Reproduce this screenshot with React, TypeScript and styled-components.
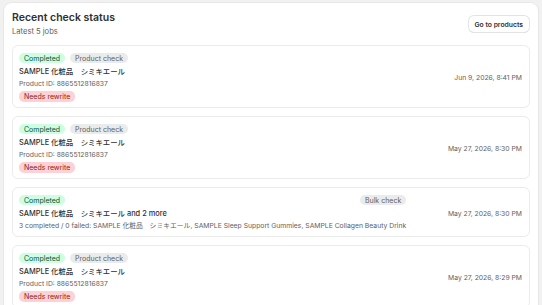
import React from 'react';
import styled, { createGlobalStyle } from 'styled-components';

type Tone = 'success' | 'neutral' | 'critical';

interface Job {
    kind: string;
    title: string;
    detail: string;
    needsRewrite: boolean;
    date: string;
}

const GlobalStyle = createGlobalStyle`
  html, body {
    margin: 0;
    padding: 0;
    background-color: #f1f1f1;
    font-family: Inter, "Noto Sans CJK JP", sans-serif;
    color: #303030;
    -webkit-font-smoothing: antialiased;
  }
`;

const Page = styled.div`
  padding: 3px 4px 0 4px;
`;

const Card = styled.div`
  background-color: #ffffff;
  border-radius: 8px;
  padding: 8px;
  box-shadow: 0 0 0 1px rgba(0, 0, 0, 0.04), 0 1px 0 rgba(0, 0, 0, 0.06);
`;

const Header = styled.div`
  display: flex;
  justify-content: space-between;
  align-items: flex-start;
`;

const HeaderText = styled.div`
  display: flex;
  flex-direction: column;
  gap: 3px;
`;

const Title = styled.h2`
  margin: 0;
  font-size: 10.5px;
  line-height: 13px;
  font-weight: 600;
  color: #303030;
`;

const Subtitle = styled.span`
  font-size: 7.6px;
  line-height: 10px;
  color: #616161;
`;

const Button = styled.button`
  margin-top: 5px;
  margin-right: 1px;
  height: 16px;
  padding: 0 6px;
  border: none;
  border-radius: 5px;
  background-color: #ffffff;
  box-shadow: 0 0 0 1px #e3e3e3, 0 1px 0 #d4d4d4;
  font-family: inherit;
  font-size: 6.8px;
  font-weight: 600;
  color: #303030;
`;

const List = styled.div`
  display: flex;
  flex-direction: column;
  gap: 8px;
  margin-top: 8px;
`;

const JobCard = styled.div`
  display: flex;
  justify-content: space-between;
  align-items: center;
  border: 1px solid #ebebeb;
  border-radius: 6px;
  padding: 7px 7px 5px 6px;
`;

const JobInfo = styled.div`
  display: flex;
  flex-direction: column;
  gap: 2px;
`;

const BadgeRow = styled.div`
  display: flex;
  justify-content: space-between;
  gap: 5px;
`;

const toneColors: Record<Tone, { bg: string; fg: string }> = {
    success: { bg: '#cdfee1', fg: '#0c5132' },
    neutral: { bg: '#ebebeb', fg: '#616161' },
    critical: { bg: '#fed1d7', fg: '#8e1f0b' },
};

const Badge = styled.span<{ $tone: Tone; $tall?: boolean }>`
  align-self: flex-start;
  display: inline-flex;
  align-items: center;
  height: ${p => (p.$tall ? 11 : 10)}px;
  padding: 0 5px;
  border-radius: 5px;
  font-size: 7px;
  font-weight: 400;
  background-color: ${p => toneColors[p.$tone].bg};
  color: ${p => toneColors[p.$tone].fg};
`;

const JobTitle = styled.span`
  font-size: 7.4px;
  line-height: 13px;
  font-weight: 500;
  color: #303030;
`;

const JobDetail = styled.span`
  margin-top: -1px;
  font-size: 6.8px;
  line-height: 10px;
  color: #616161;
`;

const DateText = styled.span`
  flex-shrink: 0;
  font-size: 6.8px;
  color: #616161;
`;

const NAME = 'SAMPLE 化粧品\u3000シミキエール';

const jobs: Job[] = [
    { kind: 'Product check', title: NAME, detail: 'Product ID: 8865512816837', needsRewrite: true, date: 'Jun 9, 2026, 8:41 PM' },
    { kind: 'Product check', title: NAME, detail: 'Product ID: 8865512816837', needsRewrite: true, date: 'May 27, 2026, 8:30 PM' },
    {
        kind: 'Bulk check',
        title: `${NAME} and 2 more`,
        detail: `3 completed / 0 failed: ${NAME}, SAMPLE Sleep Support Gummies, SAMPLE Collagen Beauty Drink`,
        needsRewrite: false,
        date: 'May 27, 2026, 8:30 PM',
    },
    { kind: 'Product check', title: NAME, detail: 'Product ID: 8865512816837', needsRewrite: true, date: 'May 27, 2026, 8:29 PM' },
    { kind: 'Product check', title: NAME, detail: 'Product ID: 8865512816837', needsRewrite: true, date: 'May 27, 2026, 8:28 PM' },
];

export default function App() {
    return (
        <>
            <GlobalStyle />
            <Page>
                <Card>
                    <Header>
                        <HeaderText>
                            <Title>Recent check status</Title>
                            <Subtitle>Latest 5 jobs</Subtitle>
                        </HeaderText>
                        <Button>Go to products</Button>
                    </Header>
                    <List>
                        {jobs.map((job, index) => (
                            <JobCard key={index}>
                                <JobInfo>
                                    <BadgeRow>
                                        <Badge $tone="success">Completed</Badge>
                                        <Badge $tone="neutral">{job.kind}</Badge>
                                    </BadgeRow>
                                    <JobTitle>{job.title}</JobTitle>
                                    <JobDetail>{job.detail}</JobDetail>
                                    {job.needsRewrite && <Badge $tone="critical" $tall>Needs rewrite</Badge>}
                                </JobInfo>
                                <DateText>{job.date}</DateText>
                            </JobCard>
                        ))}
                    </List>
                </Card>
            </Page>
        </>
    );
}
